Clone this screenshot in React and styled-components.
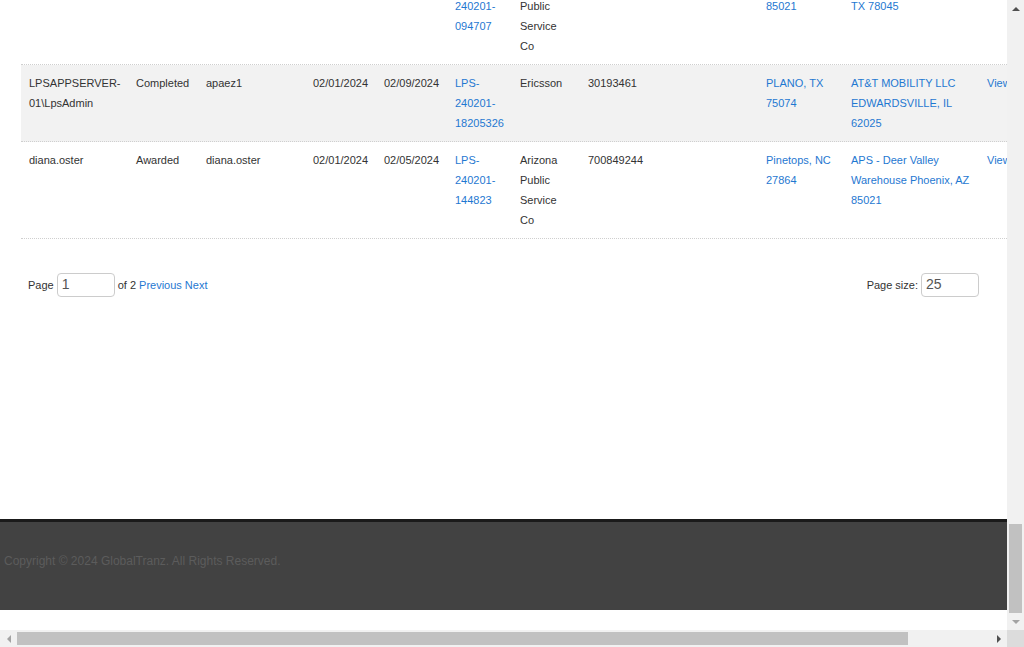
import React from 'react';
import styled, { createGlobalStyle } from 'styled-components';

const GlobalStyle = createGlobalStyle`
html, body { margin: 0; padding: 0; overflow: hidden; }
body { font-family: "Liberation Sans", Arial, sans-serif; color: #333; background: #fff; }
`;

const Screen = styled.div`
width: 1024px;
height: 647px;
display: grid;
grid-template-columns: 1007px 17px;
grid-template-rows: 630px 17px;
overflow: hidden;
`;

const Viewport = styled.div`
overflow: hidden;
`;

// the page is scrolled down: the first row sits partly above the viewport
const Scrolled = styled.div`
margin-top: -32px;
width: 1099px;
`;

const Content = styled.div`
padding-left: 21px;
`;

const Row = styled.div`
display: grid;
grid-template-columns: 107px 70px 107px 71px 71px 65px 68px 100px 78px 85px 136px 119px;
background: ${p => (p.$alt ? '#f2f2f2' : '#fff')};
border-bottom: 1px dotted #cfcfcf;
`;

const Cell = styled.div`
padding: 8px 7px 8px 8px;
font-size: 11px;
line-height: 20px;
color: ${p => (p.$link ? '#1f78d1' : '#333')};
overflow-wrap: break-word;
`;

const Pager = styled.div`
display: flex;
align-items: center;
justify-content: space-between;
width: 951px;
height: 24px;
padding: 34px 0 0 7px;
font-size: 11px;
`;

const PagerGroup = styled.div`
display: flex;
align-items: center;
gap: 3px;
`;

const PageInput = styled.div`
width: ${p => p.$w}px;
height: 24px;
box-sizing: border-box;
border: 1px solid #ccc;
border-radius: 4px;
padding: 0 4px;
font-size: 14px;
line-height: 21px;
color: #555;
background: #fff;
`;

const PagerLink = styled.a`
color: #1f78d1;
text-decoration: none;
`;

const Spacer = styled.div`
height: 222px;
`;

const Footer = styled.footer`
width: 1007px;
height: 91px;
box-sizing: border-box;
background: #424242;
border-top: 3px solid #1a1a1a;
padding: 32px 0 0 4px;
font-size: 12px;
line-height: 14px;
color: #5c5c5c;
`;

const VTrack = styled.div`
background: #f1f1f1;
display: flex;
flex-direction: column;
align-items: center;
`;

const HTrack = styled.div`
background: #f1f1f1;
display: flex;
align-items: center;
`;

const Corner = styled.div`
background: #dcdcdc;
`;

const Arrow = styled.div`
width: 17px;
height: 17px;
flex: none;
display: flex;
align-items: center;
justify-content: center;
`;

const VThumb = styled.div`
width: 13px;
height: 89px;
background: #c1c1c1;
`;

const HThumb = styled.div`
height: 13px;
width: 891px;
background: #c1c1c1;
`;

const Grow = styled.div`
flex: 1;
`;

const Tri = ({ dir }) => {
  const pts = {
    up: '0,6 4,2 8,6',
    down: '0,2 4,6 8,2',
    left: '6,0 2,4 6,8',
    right: '2,0 6,4 2,8',
  }[dir];
  return (
    <svg width="8" height="8" viewBox="0 0 8 8">
      <polygon points={pts} fill={dir === 'right' || dir === 'up' ? '#505050' : '#a3a3a3'} />
    </svg>
  );
};

const rows = [
  {
    cells: ['', '', '', '', '', 'LPS-\n240201-\n094707', 'Arizona Public Service Co', '', '', 'Phoenix, AZ\n85021', 'HEB LAREDO,\nTX 78045', ''],
  },
  {
    alt: true,
    cells: ['LPSAPPSERVER-01\\LpsAdmin', 'Completed', 'apaez1', '02/01/2024', '02/09/2024', 'LPS-240201-18205326', 'Ericsson', '30193461', '', 'PLANO, TX 75074', 'AT&T MOBILITY LLC EDWARDSVILLE, IL 62025', 'View'],
  },
  {
    cells: ['diana.oster', 'Awarded', 'diana.oster', '02/01/2024', '02/05/2024', 'LPS-240201-144823', 'Arizona Public Service Co', '700849244', '', 'Pinetops, NC 27864', 'APS - Deer Valley Warehouse Phoenix, AZ 85021', 'View'],
  },
];

const linkCols = [5, 9, 10, 11];

const renderText = t => t.split('\n').map((l, i) => (
  <React.Fragment key={i}>{i > 0 && <br />}{l}</React.Fragment>
));

export default function App() {
  return (
    <>
      <GlobalStyle />
      <Screen>
        <Viewport>
          <Scrolled>
            <Content>
              {rows.map((r, ri) => (
                <Row key={ri} $alt={r.alt}>
                  {r.cells.map((c, ci) => (
                    <Cell key={ci} $link={linkCols.includes(ci)}>{renderText(c)}</Cell>
                  ))}
                </Row>
              ))}
              <Pager>
                <PagerGroup>
                  Page <PageInput $w={58}>1</PageInput> of 2
                  <PagerLink href="#">Previous</PagerLink>
                  <PagerLink href="#">Next</PagerLink>
                </PagerGroup>
                <PagerGroup>
                  Page size: <PageInput $w={58}>25</PageInput>
                </PagerGroup>
              </Pager>
            </Content>
            <Spacer />
            <Footer>Copyright © 2024 GlobalTranz. All Rights Reserved.</Footer>
          </Scrolled>
        </Viewport>
        <VTrack>
          <Arrow><Tri dir="up" /></Arrow>
          <Grow />
          <VThumb />
          <Arrow><Tri dir="down" /></Arrow>
        </VTrack>
        <HTrack>
          <Arrow><Tri dir="left" /></Arrow>
          <HThumb />
          <Grow />
          <Arrow><Tri dir="right" /></Arrow>
        </HTrack>
        <Corner />
      </Screen>
    </>
  );
}
